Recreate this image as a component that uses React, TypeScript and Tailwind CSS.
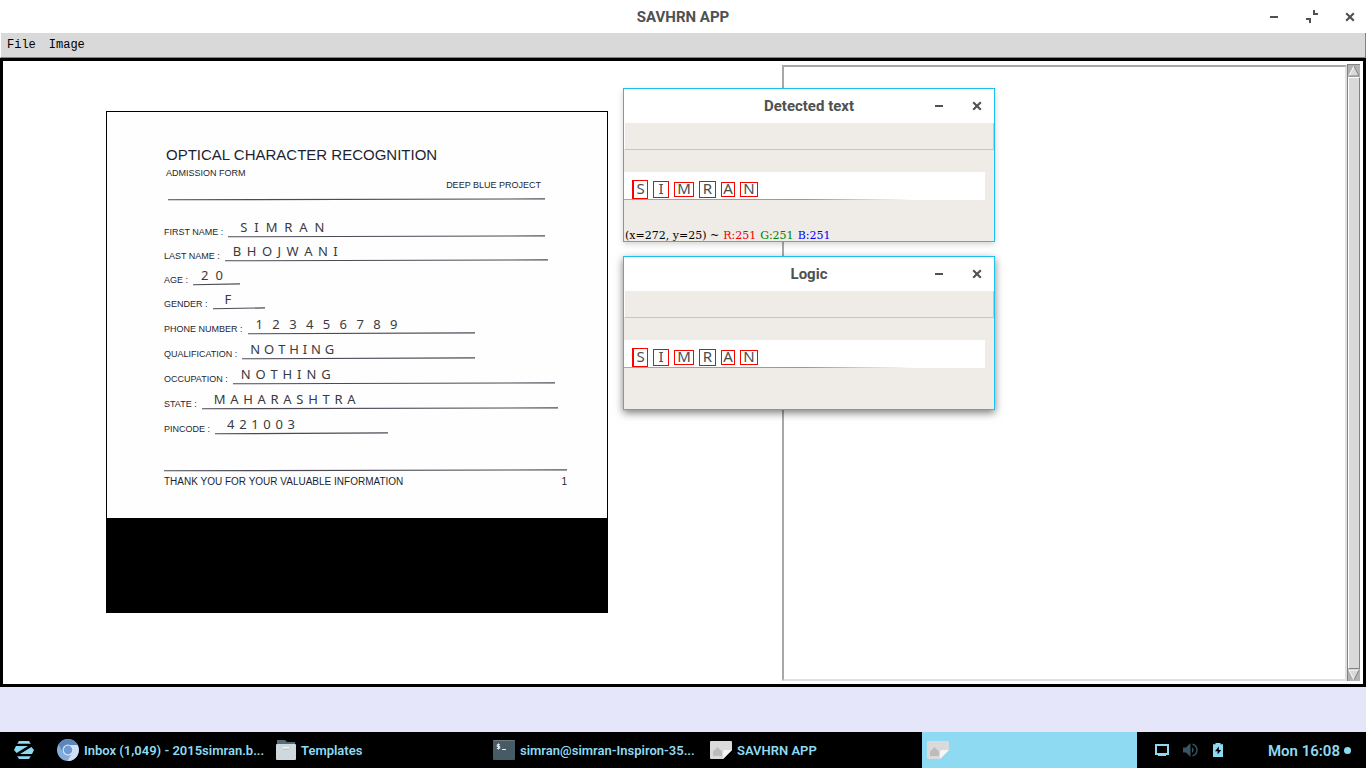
import React from "react";

type Field = { label: string; value: string; line: string; indent: string; spread: string };

const personal: Field[] = [
  { label: "FIRST NAME :", value: "SIMRAN", line: "w-[317px]", indent: "pl-3", spread: "w-[84px]" },
  { label: "LAST NAME :", value: "BHOJWANI", line: "w-[323px]", indent: "pl-2", spread: "w-[105px]" },
  { label: "AGE :", value: "20", line: "w-[47px]", indent: "pl-2", spread: "w-[22px]" },
  { label: "GENDER :", value: "F", line: "w-[52px]", indent: "pl-3", spread: "w-[10px]" },
];

const details: Field[] = [
  { label: "PHONE NUMBER :", value: "123456789", line: "w-[227px]", indent: "pl-2", spread: "w-[142px]" },
  { label: "QUALIFICATION :", value: "NOTHING", line: "w-[233px]", indent: "pl-2", spread: "w-[84px]" },
  { label: "OCCUPATION :", value: "NOTHING", line: "w-[322px]", indent: "pl-2", spread: "w-[90px]" },
  { label: "STATE :", value: "MAHARASHTRA", line: "w-[356px]", indent: "pl-3", spread: "w-[142px]" },
  { label: "PINCODE :", value: "421003", line: "w-[173px]", indent: "pl-3", spread: "w-[68px]" },
];

/** Pen line of the scanned sheet, rising slightly to the right. */
function PenLine() {
  return (
    <svg className="block h-[3px] w-full" viewBox="0 0 100 3" preserveAspectRatio="none" aria-hidden="true">
      <path d="M0 1.8 L100 0.9" stroke="#4c4a55" strokeWidth="1.1" fill="none" />
    </svg>
  );
}

function FormRow({ field, height }: { field: Field; height: string }) {
  return (
    <div className={`flex items-end gap-[5px] ${height}`}>
      <dt className="whitespace-nowrap text-[9px] leading-3">{field.label}</dt>
      <dd className={field.line}>
        <div className={field.indent}>
          <div className={`flex justify-between font-['Noto_Sans',sans-serif] text-[13px] leading-[15px] text-[#3a3a40] ${field.spread}`}>
            {field.value.split("").map((c, i) => (
              <span key={i}>{c}</span>
            ))}
          </div>
        </div>
        <PenLine />
      </dd>
    </div>
  );
}

function ScannedForm() {
  return (
    <article className="flex h-[502px] w-[502px] flex-col border border-black bg-black font-['Liberation_Sans',Arial,sans-serif] text-[#1f1f30]">
      <div className="h-[406px] bg-[#fefefe] pl-[57px] pr-10 pt-[34px]">
        <h1 className="pl-[2px] text-[15px] leading-[18px]">OPTICAL CHARACTER RECOGNITION</h1>
        <p className="pl-[2px] pt-[3px] text-[9px] leading-3">ADMISSION FORM</p>
        <p className="pr-[26px] text-right text-[9px] leading-3">DEEP BLUE PROJECT</p>
        <div className="w-[381px] pl-1 pt-[7px]">
          <PenLine />
        </div>
        <dl className="pt-[13px]">
          {personal.map((f) => (
            <FormRow key={f.label} field={f} height="h-6" />
          ))}
          {details.map((f) => (
            <FormRow key={f.label} field={f} height="h-[25px]" />
          ))}
        </dl>
        <div className="w-[403px] pt-[34px]">
          <PenLine />
        </div>
        <div className="flex justify-between pt-1 text-[10px] leading-3">
          <span>THANK YOU FOR YOUR VALUABLE INFORMATION</span>
          <span>1</span>
        </div>
      </div>
    </article>
  );
}

function MinusIcon() {
  return (
    <svg width="14" height="14" viewBox="0 0 14 14" aria-hidden="true">
      <path d="M3 7h8" stroke="#505050" strokeWidth="2" />
    </svg>
  );
}

function CloseIcon() {
  return (
    <svg width="14" height="14" viewBox="0 0 14 14" aria-hidden="true">
      <path d="M3.2 3.200l7.600 7.600M10.800 3.200l-7.600 7.600" stroke="#505050" strokeWidth="2.1" />
    </svg>
  );
}

function RestoreIcon() {
  return (
    <svg width="14" height="14" viewBox="0 0 14 14" aria-hidden="true">
      <path d="M9 0v4h4M1 9h4v4" stroke="#505050" strokeWidth="2" fill="none" />
    </svg>
  );
}

const letters = [
  { c: "S", box: "h-[19px] w-[16px] border-l-2" },
  { c: "I", box: "h-[17px] w-[16px]" },
  { c: "M", box: "h-[15px] w-[20px]" },
  { c: "R", box: "h-[17px] w-[17px]" },
  { c: "A", box: "h-[15px] w-[14px]" },
  { c: "N", box: "h-[15px] w-[18px]" },
];

function ResultWindow({ title, place, children }: { title: string; place: string; children?: React.ReactNode }) {
  return (
    <section className={`absolute flex h-[154px] w-[372px] flex-col border border-[#1cc0ee] bg-[#efebe7] ${place}`}>
      <header className="grid h-[34px] shrink-0 grid-cols-[1fr_auto_1fr] items-center bg-white">
        <span />
        <h2 className="text-[15px] font-bold leading-5 text-[#505050]">{title}</h2>
        <div className="flex justify-end gap-6 pr-[10px]">
          <button type="button" aria-label={`Minimize ${title}`}><MinusIcon /></button>
          <button type="button" aria-label={`Close ${title}`}><CloseIcon /></button>
        </div>
      </header>
      <div className="h-[27px] shrink-0 border-b border-l border-r border-b-[#c9c6c2] border-l-white border-r-[#c9c6c2]" />
      <div className="mr-[9px] mt-[22px] h-7 shrink-0 bg-white">
        <div className="flex h-[27px] items-center gap-[5px] pl-2 pt-2">
          {letters.map((l) => (
            <span
              key={l.c}
              className={`flex items-center justify-center border border-[#ff0000] pb-[3px] font-['Noto_Sans',sans-serif] text-[15px] leading-4 text-[#4c4c4c] ${l.box}`}
            >
              {l.c}
            </span>
          ))}
        </div>
        <div className="h-px bg-linear-to-r from-[#a8a8a8] via-[#999599] via-50% to-white to-80%" />
      </div>
      {children}
    </section>
  );
}

function ZorinIcon() {
  return (
    <svg width="20" height="18" viewBox="0 0 20 18" fill="#8edaf2" aria-hidden="true">
      <path d="M5 0h10l1.8 2.800H3.2z" />
      <path d="M5 18h10l1.8-2.800H3.2z" />
      <path d="M2 5h12L2.500 12L0 9z" />
      <path d="M18 13H6L17.500 6L20 9z" />
    </svg>
  );
}

function ChromiumIcon() {
  return (
    <svg width="22" height="22" viewBox="0 0 22 22" aria-hidden="true">
      <circle cx="11" cy="11" r="11" fill="#83addb" />
      <path d="M1.5 5.5A11 11 0 0 1 20.6 6H11a5 5 0 0 0-4.6 3.2L6 13z" fill="#5c85b9" />
      <path d="M20.6 6A11 11 0 0 1 10.5 22l4.8-8.4A5 5 0 0 0 14 7V6z" fill="#d3dff0" />
      <circle cx="11" cy="11" r="5.4" fill="#e4ecf7" />
      <circle cx="11" cy="11" r="4.4" fill="#6e9ad6" />
    </svg>
  );
}

function FolderIcon() {
  return (
    <svg width="20" height="20" viewBox="0 0 20 20" aria-hidden="true">
      <path d="M1 0h8l2 2h8v6H1z" fill="#566b76" />
      <rect y="4" width="20" height="16" rx="1" fill="#cfd8dc" />
      <path d="M7 8h6" stroke="#fff" strokeWidth="1.4" />
      <path d="M7 9h6" stroke="#9aa6ab" strokeWidth=".6" />
    </svg>
  );
}

function TerminalIcon() {
  return (
    <svg width="22" height="20" viewBox="0 0 22 20" aria-hidden="true">
      <rect width="22" height="20" rx="1" fill="#485a64" />
      <path d="M.5.5h21" stroke="#6c7a82" />
      <path d="M7 4.7H4.2v1.8h2.6v1.9H3.8M5.5 3.5v6M9 9.5h4" stroke="#e8eef0" strokeWidth="1" fill="none" />
    </svg>
  );
}

function ImageIcon() {
  return (
    <svg width="22" height="18" viewBox="0 0 22 18" aria-hidden="true">
      <path d="M1 0h20a1 1 0 0 1 1 1v8l-9 9H1a1 1 0 0 1-1-1V1a1 1 0 0 1 1-1z" fill="#dadada" />
      <path d="M22 9l-9 9V10.500a1.500 1.500 0 0 1 1.500-1.500z" fill="#f6f6f6" />
      <path d="M3 15v-4.500L7.500 6l4.500 4.500V15z" fill="#bcbcbc" />
    </svg>
  );
}

const tasks = [
  { label: "Inbox (1,049) - 2015simran.b...", icon: <ChromiumIcon />, look: "pl-[3px]" },
  { label: "Templates", icon: <FolderIcon />, look: "pl-[5px]" },
  { label: "simran@simran-Inspiron-35...", icon: <TerminalIcon />, look: "pl-[5px]" },
  { label: "SAVHRN APP", icon: <ImageIcon />, look: "pl-[5px]" },
  { label: "", icon: <ImageIcon />, look: "bg-[#8edaf2] pl-[5px]" },
];

function Taskbar() {
  return (
    <footer className="flex h-9 shrink-0 items-stretch bg-black text-[#8edaf2]">
      <button type="button" aria-label="Zorin menu" className="w-[54px] shrink-0 pl-[14px]">
        <ZorinIcon />
      </button>
      <nav className="grid min-w-0 flex-1 grid-cols-5 gap-[2px]" aria-label="Open windows">
        {tasks.map((t, i) => (
          <button
            key={i}
            type="button"
            aria-label={t.label || "Detected text"}
            className={`flex min-w-0 items-center gap-[5px] text-left text-[13px] font-semibold ${t.look}`}
          >
            <span className="shrink-0">{t.icon}</span>
            <span className="whitespace-nowrap pt-[2px]">{t.label}</span>
          </button>
        ))}
      </nav>
      <div className="flex w-[229px] shrink-0 items-center justify-between pl-[18px] pr-[15px]">
        <div className="flex items-center gap-[14px]">
          <svg width="14" height="14" viewBox="0 0 14 14" aria-hidden="true">
            <path d="M1 2h12v9H1z" stroke="#8edaf2" strokeWidth="2" fill="none" />
            <path d="M3 12.500h8" stroke="#8edaf2" />
          </svg>
          <svg width="15" height="14" viewBox="0 0 15 14" aria-hidden="true">
            <path d="M0 4.500h3L7.500 0v14L3 9.500H0z" fill="#365661" />
            <path d="M9 4.200a3.200 3.200 0 0 1 0 5.600z" fill="#365661" />
            <path d="M9.500 1.200a6 6 0 0 1 0 11.600" stroke="#365661" strokeWidth="1.400" fill="none" />
          </svg>
          <svg width="14" height="14" viewBox="0 0 14 14" aria-hidden="true">
            <path d="M3.500 0h5v1.200H11V14H1V1.200h2.500z" fill="#8edaf2" />
            <path d="M6.800 3.500L3 8.200h2.600V11.500L9.200 7H6.800z" fill="#000" />
          </svg>
        </div>
        <div className="flex items-center gap-1">
          <time className="pt-[2px] text-[15px] font-semibold leading-5">Mon 16:08</time>
          <span className="size-[7px] rounded-full bg-[#8edaf2]" />
        </div>
      </div>
    </footer>
  );
}

export default function App() {
  return (
    <div className="relative flex min-h-screen flex-col bg-[#e6e6fa] font-['Roboto',sans-serif]">
      <header className="grid h-[33px] shrink-0 grid-cols-[1fr_auto_1fr] items-center bg-white">
        <span />
        <div className="text-[15px] font-bold leading-5 text-[#505050]">SAVHRN APP</div>
        <div className="flex justify-end gap-6 pr-[9px]">
          <button type="button" aria-label="Minimize"><MinusIcon /></button>
          <button type="button" aria-label="Restore"><RestoreIcon /></button>
          <button type="button" aria-label="Close"><CloseIcon /></button>
        </div>
      </header>

      <nav className="flex h-[25px] shrink-0 items-center gap-[13px] border-b border-l border-r border-b-[#828282] border-l-white border-r-[#828282] bg-[#d9d9d9] pl-[6px] font-['Liberation_Mono',monospace] text-[12px] leading-4 text-black">
        <button type="button">File</button>
        <button type="button">Image</button>
      </nav>

      <main className="grid flex-1 grid-cols-[779fr_581fr] border-[3px] border-black bg-white">
        <div className="pl-[103px] pt-[50px]">
          <ScannedForm />
        </div>
        <div className="flex pb-[3px] pr-[3px] pt-[3px]">
          <textarea
            aria-label="Recognized text"
            className="mt-px flex-1 resize-none border-b-2 border-l-2 border-r-2 border-t-2 border-b-[#e0e0e0] border-l-[#a8a8a8] border-r-[#e0e0e0] border-t-[#a8a8a8] bg-white p-1 outline-none"
          />
          <div className="flex w-[13px] flex-col border-l border-t border-[#828282] bg-[#b3b3b3]">
            <button type="button" aria-label="Scroll up" className="h-3">
              <svg width="12" height="12" viewBox="0 0 12 12" aria-hidden="true">
                <path d="M6 1l5 10H1z" fill="#d9d9d9" />
                <path d="M6 1L1 11" stroke="#fff" />
                <path d="M6 1l5 10H1" stroke="#828282" fill="none" />
              </svg>
            </button>
            <div className="flex-1 border-b border-l border-r border-t border-b-[#828282] border-l-white border-r-[#828282] border-t-white bg-[#d9d9d9]" />
            <button type="button" aria-label="Scroll down" className="h-3">
              <svg width="12" height="12" viewBox="0 0 12 12" aria-hidden="true">
                <path d="M1 1h10L6 11z" fill="#d9d9d9" />
                <path d="M11 1H1l5 10" stroke="#fff" fill="none" />
                <path d="M11 1L6 11" stroke="#828282" />
              </svg>
            </button>
          </div>
        </div>
      </main>
      <div className="h-[45px] shrink-0" />
      <Taskbar />

      <ResultWindow title="Detected text" place="left-[623px] top-[88px] shadow-[0_2px_6px_rgba(0,0,0,0.18)]">
        <p className="mt-auto flex h-[11px] items-center gap-1 overflow-hidden whitespace-nowrap pl-px font-['DejaVu_Serif',serif] text-[11px] leading-3 text-black">
          <span>(x=272, y=25) ~</span>
          <span className="text-[#f00000]">R:251</span>
          <span className="text-[#008000]">G:251</span>
          <span className="text-[#0000f0]">B:251</span>
        </p>
      </ResultWindow>
      <ResultWindow title="Logic" place="left-[623px] top-[256px] shadow-[0_3px_8px_rgba(0,0,0,0.5)]" />
    </div>
  );
}
